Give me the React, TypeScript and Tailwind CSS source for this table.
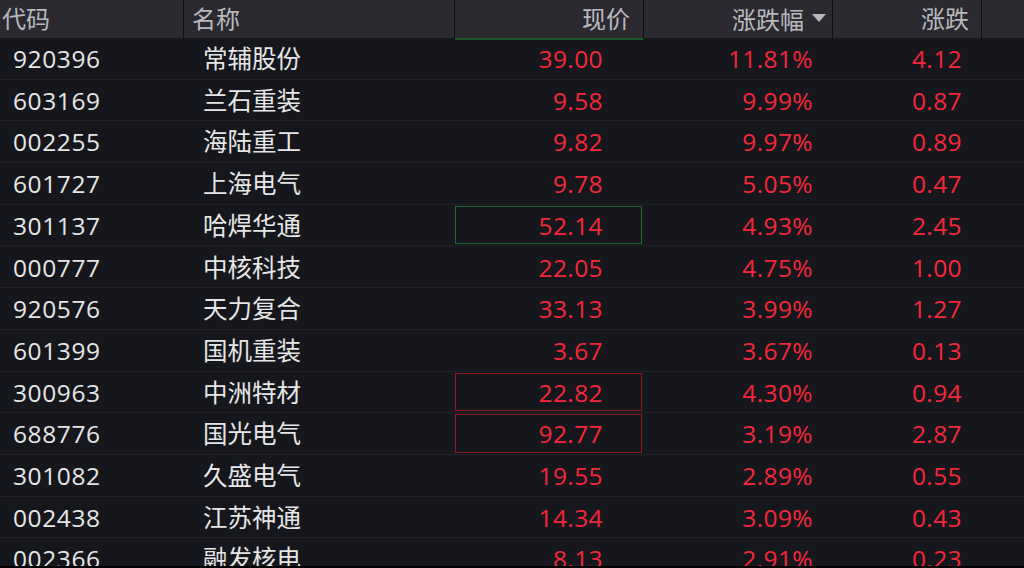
type Row = {
  code: string;
  name: string;
  price: string;
  pct: string;
  chg: string;
  box?: "green" | "red";
};

const rows: Row[] = [
  { code: "920396", name: "常辅股份", price: "39.00", pct: "11.81%", chg: "4.12" },
  { code: "603169", name: "兰石重装", price: "9.58", pct: "9.99%", chg: "0.87" },
  { code: "002255", name: "海陆重工", price: "9.82", pct: "9.97%", chg: "0.89" },
  { code: "601727", name: "上海电气", price: "9.78", pct: "5.05%", chg: "0.47" },
  { code: "301137", name: "哈焊华通", price: "52.14", pct: "4.93%", chg: "2.45", box: "green" },
  { code: "000777", name: "中核科技", price: "22.05", pct: "4.75%", chg: "1.00" },
  { code: "920576", name: "天力复合", price: "33.13", pct: "3.99%", chg: "1.27" },
  { code: "601399", name: "国机重装", price: "3.67", pct: "3.67%", chg: "0.13" },
  { code: "300963", name: "中洲特材", price: "22.82", pct: "4.30%", chg: "0.94", box: "red" },
  { code: "688776", name: "国光电气", price: "92.77", pct: "3.19%", chg: "2.87", box: "red" },
  { code: "301082", name: "久盛电气", price: "19.55", pct: "2.89%", chg: "0.55" },
  { code: "002438", name: "江苏神通", price: "14.34", pct: "3.09%", chg: "0.43" },
  { code: "002366", name: "融发核电", price: "8.13", pct: "2.91%", chg: "0.23" },
];

const grid = "grid grid-cols-[184px_271px_189px_189px_149px_42px]";

const boxStyles = {
  green: "border border-[#1d6a2c]",
  red: "border border-[#8e1820]",
};

export default function App() {
  return (
    <div className="h-[568px] w-[1024px] overflow-hidden bg-black font-['Open_Sans','Noto_Sans_CJK_SC',sans-serif]">
      <div className="h-[566px] overflow-hidden bg-[#15171c]">
        <div className={`${grid} h-[38px] bg-[#2b2a31] text-[24px] leading-[38px] text-[#b9b9bd]`}>
          <div className="border-r border-[#0f0f12] pl-[2px]">代码</div>
          <div className="border-r border-[#0f0f12] pl-[8px]">名称</div>
          <div className="border-r border-b-2 border-r-[#0f0f12] border-b-[#1b5b2a] pr-[13px] text-right">现价</div>
          <div className="flex items-center justify-end gap-[8px] border-r border-[#0f0f12] pr-[6px]">
            <span>涨跌幅</span>
            <svg width="14" height="9" viewBox="0 0 14 9" className="mb-[3px]">
              <path d="M0 0 H14 L7 8 Z" fill="#b9b9bd" />
            </svg>
          </div>
          <div className="border-r border-[#0f0f12] pr-[12px] text-right">涨跌</div>
          <div />
        </div>
        {rows.map((r) => (
          <div
            key={r.code}
            className={`${grid} h-[41.7px] border-b border-[#1f2126] text-[24.5px] leading-none`}
          >
            <div className="flex items-center pl-[13px] pt-[2px] tracking-[0.6px] text-[#e6e6e6]">{r.code}</div>
            <div className="flex items-center pl-[19px] pt-[2px] text-[#e6e6e6]">{r.name}</div>
            <div className="flex items-center py-[1px] pr-[2px]">
              <div
                className={`flex h-full w-full items-center justify-end pr-[38px] pt-[2px] tracking-[0.4px] text-[#f5273a] ${
                  r.box ? boxStyles[r.box] : "border border-transparent"
                }`}
              >
                {r.price}
              </div>
            </div>
            <div className="flex items-center justify-end pr-[20px] pt-[2px] tracking-[0.4px] text-[#f5273a]">{r.pct}</div>
            <div className="flex items-center justify-end pr-[20px] pt-[2px] tracking-[0.4px] text-[#f5273a]">{r.chg}</div>
            <div />
          </div>
        ))}
      </div>
    </div>
  );
}
